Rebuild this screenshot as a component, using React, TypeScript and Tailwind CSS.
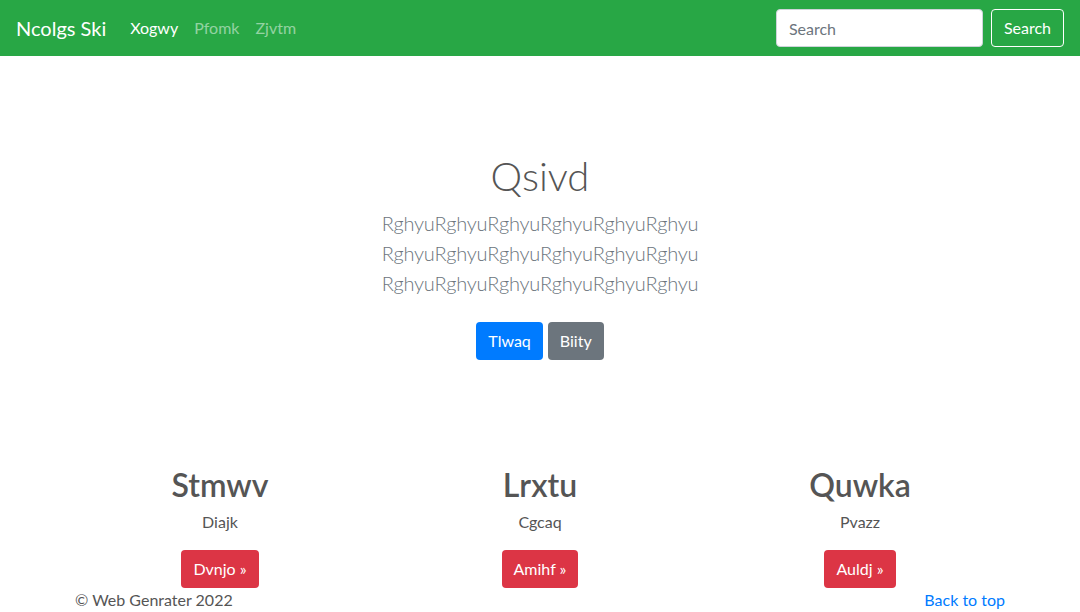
import React from "react";

export default function App() {
  const cols = [
    { h: "Stmwv", p: "Diajk", b: "Dvnjo" },
    { h: "Lrxtu", p: "Cgcaq", b: "Amihf" },
    { h: "Quwka", p: "Pvazz", b: "Auldj" },
  ];
  return (
    <div
      className="w-[1080px] h-[612px] overflow-hidden bg-white text-[#555555]"
      style={{ fontFamily: "Lato, 'Noto Sans', sans-serif" }}
    >
      <nav className="h-14 bg-[#28a745] flex items-center px-4">
        <a className="text-xl text-white mr-4 leading-[30px]">Ncolgs Ski</a>
        <div className="flex text-base">
          <a className="px-2 text-white">Xogwy</a>
          <a className="px-2 text-white/50">Pfomk</a>
          <a className="px-2 text-white/50">Zjvtm</a>
        </div>
        <div className="ml-auto flex items-center">
          <input
            placeholder="Search"
            className="w-[207px] h-[38px] rounded border border-[#ced4da] bg-white px-3 text-base text-[#495057] placeholder:text-[#6c757d] outline-none"
          />
          <button className="ml-2 h-[38px] rounded border border-white px-3 text-base text-white">
            Search
          </button>
        </div>
      </nav>

      <section className="text-center pt-[96px]">
        <h1 className="text-[40px] font-light leading-[48px] mb-2">Qsivd</h1>
        <p className="text-xl font-light leading-[30px] text-[#6c757d] tracking-[-0.25px]">
          <span className="block">RghyuRghyuRghyuRghyuRghyuRghyu</span>
          <span className="block">RghyuRghyuRghyuRghyuRghyuRghyu</span>
          <span className="block">RghyuRghyuRghyuRghyuRghyuRghyu</span>
        </p>
        <div className="mt-[24px] flex justify-center gap-[5px]">
          <a className="h-[38px] px-3 rounded bg-[#007bff] text-white text-base flex items-center">
            Tlwaq
          </a>
          <a className="h-[38px] px-3 rounded bg-[#6c757d] text-white text-base flex items-center">
            Biity
          </a>
        </div>
      </section>

      <div className="w-[960px] mx-auto mt-[106px] grid grid-cols-3">
        {cols.map((c) => (
          <div key={c.h} className="px-[15px] text-center flex flex-col items-center">
            <h2 className="text-[32px] font-semibold leading-[38px]">{c.h}</h2>
            <p className="mt-1.5 text-base leading-6">{c.p}</p>
            <a className="mt-4 h-[38px] px-3 rounded bg-[#dc3545] text-white text-base flex items-center">
              {c.b} »
            </a>
          </div>
        ))}
      </div>

      <footer className="w-[960px] mx-auto px-[15px] flex justify-between text-base leading-6">
        <span>© Web Genrater 2022</span>
        <a className="text-[#007bff]">Back to top</a>
      </footer>
    </div>
  );
}
